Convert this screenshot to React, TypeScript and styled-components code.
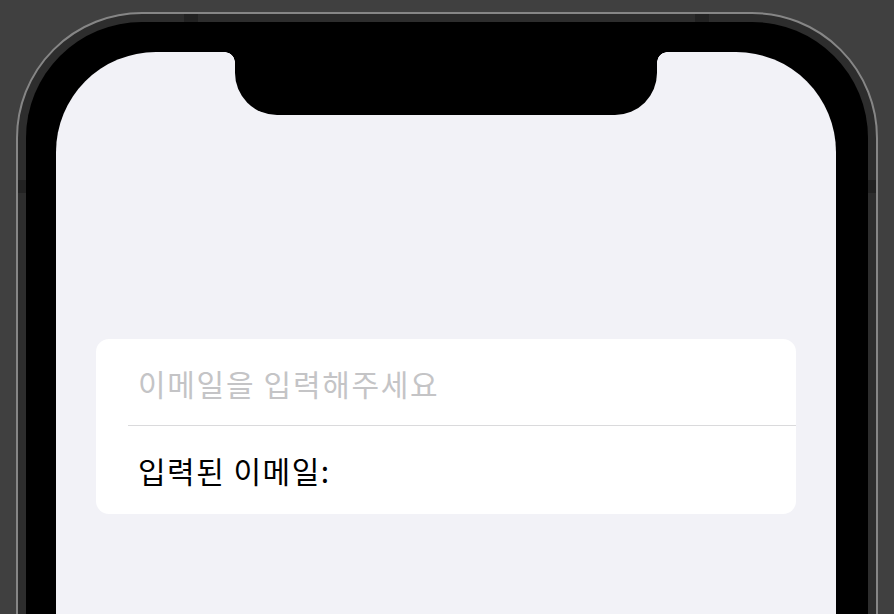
import React from "react";
import styled, { createGlobalStyle } from "styled-components";

const Global = createGlobalStyle`
  html, body {
    margin: 0;
    padding: 0;
    background: #404040;
    overflow: hidden;
    height: 100%;
  }
  body {
    font-family: "Noto Sans CJK KR", "Noto Sans", sans-serif;
  }
`;

const Stage = styled.div`
  width: 894px;
  height: 614px;
  padding: 12px 0 0 16px;
  box-sizing: border-box;
  overflow: hidden;
`;

const Frame = styled.div`
  position: relative;
  width: 862px;
  height: 900px;
  box-sizing: border-box;
  border: 2px solid #868686;
  background: #2d2d2d;
  border-radius: 126px;
  padding: 8px;
`;

const Antenna = styled.div<{ $side: "top" | "left" | "right"; $pos: number }>`
  position: absolute;
  background: #222;
  ${(p) =>
    p.$side === "top"
      ? `top: 0; left: ${p.$pos}px; width: 14px; height: 8px;`
      : p.$side === "left"
      ? `left: 0; top: ${p.$pos}px; width: 8px; height: 13px;`
      : `right: 0; top: ${p.$pos}px; width: 8px; height: 13px;`}
`;

const Bezel = styled.div`
  height: 100%;
  box-sizing: border-box;
  background: #000;
  border-radius: 116px;
  padding: 30px 32px 0 30px;
`;

const Screen = styled.div`
  position: relative;
  height: 100%;
  background: #f2f2f7;
  border-radius: 100px 100px 0 0;
  padding: 287px 40px 0;
  box-sizing: border-box;
`;

const Notch = styled.div`
  position: absolute;
  top: 0;
  left: 50%;
  transform: translateX(-50%);
  width: 422px;
  height: 63px;
  background: #000;
  border-radius: 0 0 42px 42px;

  &::before,
  &::after {
    content: "";
    position: absolute;
    top: 0;
    width: 10px;
    height: 10px;
  }
  &::before {
    left: -10px;
    background: radial-gradient(circle at 0 100%, transparent 9.5px, #000 10px);
  }
  &::after {
    right: -10px;
    background: radial-gradient(circle at 100% 100%, transparent 9.5px, #000 10px);
  }
`;

const Card = styled.div`
  background: #fff;
  border-radius: 13px;
  display: flex;
  flex-direction: column;
  overflow: hidden;
`;

const Row = styled.div<{ $divider?: boolean }>`
  position: relative;
  height: ${(p) => (p.$divider ? "87px" : "88px")};
  display: flex;
  align-items: center;
  padding-left: 42px;
  box-sizing: border-box;
  ${(p) =>
    p.$divider
      ? `&::after {
    content: "";
    position: absolute;
    left: 32px;
    right: 0;
    bottom: 0;
    height: 1px;
    background: #dadadc;
  }`
      : ""}
`;

const Input = styled.input`
  border: none;
  outline: none;
  background: transparent;
  padding: 0;
  width: 100%;
  font-family: "Noto Sans CJK KR", "Noto Sans", sans-serif;
  font-size: 30px;
  letter-spacing: 1.7px;
  color: #000;
  &::placeholder {
    color: #c4c4c6;
  }
`;

const Label = styled.span`
  font-size: 30px;
  letter-spacing: 1.5px;
  color: #000;
`;

export default function App() {
  const [email, setEmail] = React.useState("");
  return (
    <>
      <Global />
      <Stage>
        <Frame>
          <Antenna $side="top" $pos={166} />
          <Antenna $side="top" $pos={677} />
          <Antenna $side="left" $pos={166} />
          <Antenna $side="right" $pos={166} />
          <Bezel>
            <Screen>
              <Notch />
              <Card>
                <Row $divider>
                  <Input
                    placeholder="이메일을 입력해주세요"
                    value={email}
                    onChange={(e) => setEmail(e.target.value)}
                  />
                </Row>
                <Row>
                  <Label>입력된 이메일: {email}</Label>
                </Row>
              </Card>
            </Screen>
          </Bezel>
        </Frame>
      </Stage>
    </>
  );
}
